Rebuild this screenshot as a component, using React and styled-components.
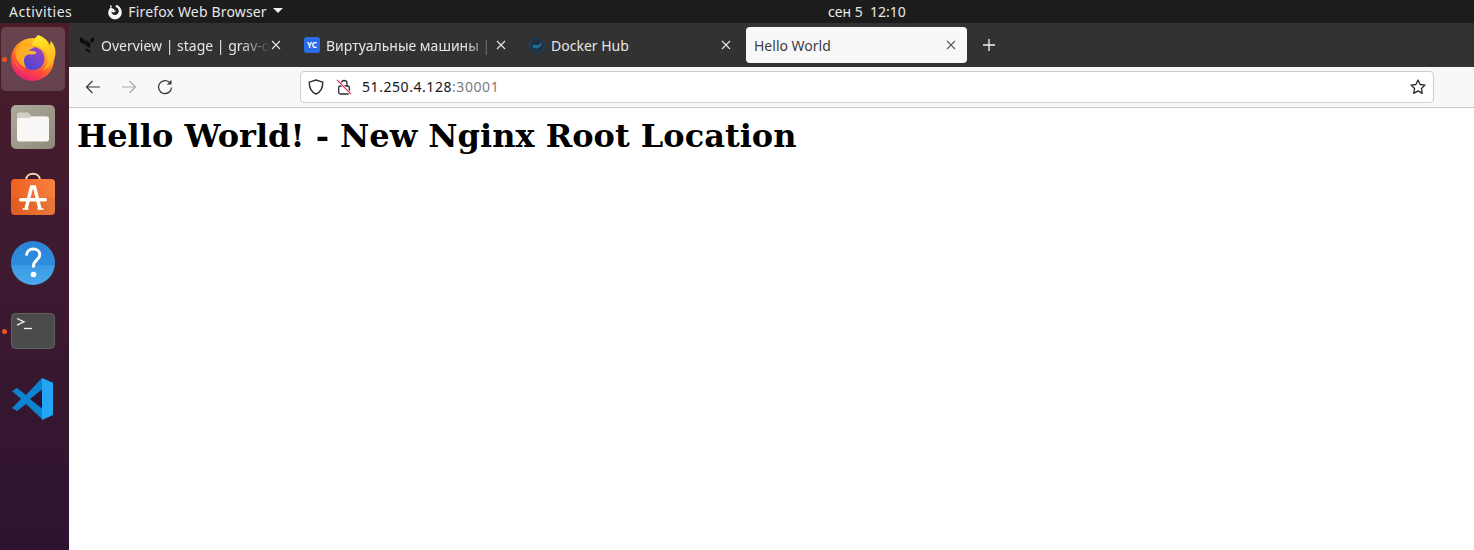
import React from "react";
import styled, { createGlobalStyle } from "styled-components";

const Global = createGlobalStyle`
  html, body { margin: 0; padding: 0; background: #fff; }
  body { font-family: "Noto Sans", "Open Sans", sans-serif; overflow: hidden; }
  #root { width: 1474px; height: 550px; }
`;

const Screen = styled.div`
  width: 1474px; height: 550px; display: flex; flex-direction: column; overflow: hidden;
`;
const TopBar = styled.header`
  height: 23px; flex: none; background: #1c1c1c; color: #e6e6e6; display: flex; align-items: center;
  font-size: 14px; line-height: 23px; white-space: nowrap; padding-left: 9px;
`;
const TopLeft = styled.div`
  width: 819px; flex: none; display: flex; align-items: center; gap: 35px;
`;
const Activities = styled.span`letter-spacing: 0.5px;`;
const AppMenu = styled.div`display: flex; align-items: center; gap: 5px;`;
const AppName = styled.span`letter-spacing: 0.16px; margin-right: 1px;`;
const Caret = styled.span`
  width: 0; height: 0; border-left: 5px solid transparent; border-right: 5px solid transparent;
  border-top: 5px solid #eee; margin-top: -2px;
`;
const Clock = styled.div`white-space: pre; color: #e8e8e8;`;
const Desktop = styled.div`flex: 1; display: flex; min-height: 0;`;
const Dock = styled.nav`
  width: 69px; flex: none; box-sizing: border-box; padding: 4px 4px 0 1px; display: flex; flex-direction: column; gap: 4px;
  background: linear-gradient(180deg, #4a1d29 0%, #3d1a30 45%, #2e1330 100%);
`;
const DockSlot = styled.div`
  height: 64px; position: relative; display: flex; align-items: center; justify-content: center; border-radius: 5px;
  background: ${p => (p.$active ? "rgba(255,255,255,.17)" : "transparent")};
`;
const RunDot = styled.span`
  position: absolute; left: 1px; top: 50%; width: 5px; height: 5px; margin-top: -2px; border-radius: 50%; background: #e95420;
`;
const Browser = styled.main`flex: 1; min-width: 0; display: flex; flex-direction: column; background: #fff;`;
const TabBar = styled.div`
  height: 44px; flex: none; background: #323232; display: flex; align-items: center; padding-left: 2px; box-sizing: border-box;
`;
const Tab = styled.div`
  width: ${p => (p.$active ? "221px" : "225px")}; height: 36px; flex: none; box-sizing: border-box; display: flex; align-items: center;
  padding: 0 ${p => (p.$active ? "11px" : "15px")} 0 ${p => (p.$active ? "8px" : "8px")};
  border-radius: 4px; font-size: 14px; white-space: nowrap;
  color: ${p => (p.$active ? "#3d3d42" : "#e6e6e6")}; background: ${p => (p.$active ? "#f8f8f8" : "transparent")};
`;
const Favicon = styled.span`
  width: 16px; height: 16px; flex: none; margin-right: 6px; display: flex; align-items: center; justify-content: center;
`;
const YcBadge = styled.span`
  width: 16px; height: 16px; border-radius: 3px; background: #2a6ce8; color: #fff; font-size: 8px; font-weight: 700;
  display: flex; align-items: center; justify-content: center; line-height: 1;
`;
const TabTitle = styled.span`
  flex: 1; min-width: 0;
  ${p => p.$fade && "mask-image: linear-gradient(90deg, #000 82%, transparent 100%);"}
`;
const NewTab = styled.span`margin-left: 15px; display: flex;`;
const Toolbar = styled.div`
  height: 41px; flex: none; box-sizing: border-box; background: #f8f8f8; border-bottom: 1px solid #c8c8c8;
  display: flex; align-items: center; padding: 0 40px 1px 16px;
`;
const NavBtn = styled.span`width: 16px; height: 16px; margin-right: 20px; display: flex; flex: none; color: ${p => p.$off ? "#a9a9ab" : "#38383d"};`;
const UrlBar = styled.div`
  margin-left: 107px; flex: 1; height: 32px; box-sizing: border-box; background: #fff; border: 1px solid #cfcfcf; border-radius: 4px;
  display: flex; align-items: center; padding: 0 7px 0 7px; font-size: 14px; color: #15141a;
`;
const UrlIcon = styled.span`width: 16px; height: 16px; flex: none; margin-right: 12px; display: flex;`;
const UrlText = styled.span`flex: 1; margin-left: -2px; letter-spacing: 0.56px;`;
const Port = styled.span`color: #7b7b7f;`;
const Page = styled.div`flex: 1; padding: 8px; background: #fff;`;
const Heading = styled.h1`
  margin: 2px 0 0; font: 700 32px/37px "DejaVu Serif", serif; color: #000; white-space: nowrap;
`;
const LogoWrap = styled.span`display: flex; margin-top: -2px;`;

const Close = ({ color = "#e6e6e6" }) => (
  <svg width="10" height="10" viewBox="0 0 10 10" style={{ flex: "none" }}>
    <path d="M1 1l8 8M9 1l-8 8" stroke={color} strokeWidth="1.1" />
  </svg>
);

const FirefoxGlyph = () => (
  <svg width="16" height="16" viewBox="0 0 16 16">
    <path d="M9.500 .8 8.300 3C10.600 3.200 12 5.300 11.700 7.500 11.400 9.700 9.500 11.200 7.400 10.900 5.500 10.600 4.300 9 4.600 7.400c.5.800 1.500 1.200 2.500 1 1-.2 1.700-1 1.800-1.800H6.800c0-.6.400-1 .9-1.400C6.200 4.800 5 4.300 4.100 3.200 2.300 4.500 1.200 6.300 1.200 8.400 1.200 12.200 4.300 15.200 8 15.200c3.800 0 6.800-3 6.800-6.800 0-3.500-2.300-6.500-5.300-7.600z" fill="#f4f4f4" />
    <path d="M3.500 .8 5.200 3 3 3.400z" fill="#f4f4f4" />
  </svg>
);

const FirefoxLogo = () => (
  <svg width="46" height="46" viewBox="0 0 46 46">
    <defs>
      <linearGradient id="ffOuter" x1="0.8" y1="0" x2="0.3" y2="1">
        <stop offset="0" stopColor="#ffd426" />
        <stop offset=".4" stopColor="#ff9a1f" />
        <stop offset=".68" stopColor="#ff4d38" />
        <stop offset="1" stopColor="#ea1a7c" />
      </linearGradient>
      <linearGradient id="ffInner" x1="0.75" y1="0" x2="0.25" y2="1">
        <stop offset="0" stopColor="#9a44c8" />
        <stop offset="1" stopColor="#4a46d0" />
      </linearGradient>
      <linearGradient id="ffFlame" x1="0.4" y1="0" x2="0.7" y2="1">
        <stop offset="0" stopColor="#ffea2a" />
        <stop offset="1" stopColor="#ffa61c" />
      </linearGradient>
      <linearGradient id="ffFox" x1="0" y1="0" x2="1" y2="0">
        <stop offset="0" stopColor="#ffa81f" />
        <stop offset="1" stopColor="#ffc42a" />
      </linearGradient>
    </defs>
    <circle cx="22.500" cy="24.500" r="21.500" fill="url(#ffOuter)" />
    <path d="M28 0c-3 3-5.500 6.500-6 10.500 6 .3 12 3 14.500 8.500 1.500 3.500 1.500 7.500 0 11-1 2.300-2.500 4-4 5.500 8-3 13-9.500 13-18 0-5-2-9-5-12 .2 2 0 3.500-.8 4.800C38.500 6 34 2 28 0z" fill="url(#ffFlame)" />
    <circle cx="23" cy="23.500" r="11.500" fill="url(#ffInner)" />
    <path d="M13 8c.5 2 1.500 3.300 3 4.500 3.500-1 6.500-.7 8.500 0-2.500.8-4.500 1.800-6 3.500 2.500-.5 5-.2 7.500 1 .8.500.5 1.500-1 2-2 .6-4 .3-6 .5-3 .3-5 2.700-5 6 0 3 1 5.500 2.500 7.500-6-2-10.500-7.500-11-13.500-.2-2.500 1-5 2.500-7 .3 1 .8 1.800 1.300 2.500C8.300 13.500 10 10 13 8z" fill="url(#ffFox)" opacity=".95" />
    <path d="M4 20c1 7 5 13 11 16-4-1-8-4-10-8-1-2.500-1.500-5-1-8z" fill="#ff6a2a" />
  </svg>
);

const FilesIcon = () => (
  <svg width="44" height="44" viewBox="0 0 44 44">
    <defs>
      <linearGradient id="filesBg" x1="0" y1="0" x2="1" y2="1">
        <stop offset="0" stopColor="#aeaa9b" /><stop offset="1" stopColor="#8f8a79" />
      </linearGradient>
    </defs>
    <rect width="44" height="44" rx="5" fill="url(#filesBg)" />
    <path d="M6 10a2.500 2.500 0 0 1 2.500-2.500h8.500l4 4H35a3 3 0 0 1 3 3v6H6z" fill="#d3cfc4" />
    <path d="M6 15a2 2 0 0 1 2-2h9.500l4-1.500H35.500a2.500 2.500 0 0 1 2.500 2.500v20a2.500 2.500 0 0 1-2.500 2.500h-27A2.500 2.500 0 0 1 6 34z" fill="#f8f7f5" />
  </svg>
);

const StoreIcon = () => (
  <svg width="44" height="44" viewBox="0 0 44 44" style={{ overflow: "visible" }}>
    <defs>
      <linearGradient id="storeBg" x1="0" y1="0" x2="1" y2="0">
        <stop offset="0" stopColor="#ee6122" /><stop offset="1" stopColor="#f5813f" />
      </linearGradient>
    </defs>
    <path d="M15 7C15.500 -1.500 28.500 -1.500 29 7" fill="none" stroke="#fbd9b0" strokeWidth="2" />
    <rect y="6" width="44" height="36" rx="4" fill="url(#storeBg)" />
    <path d="M0 24h44v14a4 4 0 0 1-4 4H4a4 4 0 0 1-4-4z" fill="#000" opacity=".05" />
    <path d="M15 36 20.500 14h3L29 36" fill="none" stroke="#fff" strokeWidth="3.400" />
    <rect x="8" y="25" width="28" height="3.600" rx="1.800" fill="#fff" />
    <path d="M11.500 36h6M26.500 36h6" stroke="#fff" strokeWidth="1.400" />
  </svg>
);

const HelpIcon = () => (
  <svg width="44" height="44" viewBox="0 0 44 44">
    <defs>
      <linearGradient id="helpBg" x1="0" y1="0" x2="0" y2="1">
        <stop offset="0" stopColor="#2a84d6" /><stop offset=".55" stopColor="#2f8cdc" /><stop offset=".55" stopColor="#3b9ae4" /><stop offset="1" stopColor="#4aaaec" />
      </linearGradient>
    </defs>
    <circle cx="22" cy="22" r="22" fill="url(#helpBg)" />
    <path d="M15.500 14.500c0-4 3-6.500 6.800-6.500 3.800 0 6.500 2.400 6.500 5.700 0 5-6.300 5.600-6.300 11.300v1.500" fill="none" stroke="#fff" strokeWidth="3" />
    <circle cx="22.500" cy="33.500" r="2.800" fill="#fff" />
  </svg>
);

const TerminalIcon = () => (
  <svg width="44" height="36" viewBox="0 0 44 36">
    <rect x=".5" y=".5" width="43" height="35" rx="4" fill="#4b4b4b" stroke="#626262" />
    <path d="M6 5.500l7 3.300-7 3.300" fill="none" stroke="#f2f2f2" strokeWidth="1.300" />
    <path d="M13 15.500h8" stroke="#f2f2f2" strokeWidth="1.300" />
  </svg>
);

const VsCodeIcon = () => (
  <svg width="44" height="44" viewBox="0 0 44 44">
    <path d="M31 1 15 18 6 11 1 14l9 8-9 9 5 3 9-7 16 15 11-5V6z" fill="#0c83cf" />
    <path d="M31 1l11 5v32l-11 5z" fill="#22a5f5" />
    <path d="M31 12.500 19 22l12 9.500z" fill="#2e1330" />
  </svg>
);

const TerraformIcon = () => (
  <svg width="16" height="16" viewBox="0 0 16 16">
    <path d="M1 0l4.800 2.800v5L1 5zM6.300 3.100l4.800 2.800v5L6.300 8.100zM11.600 5.900l3.400-2v-4l-3.400 2zM6.300 11l4.800 2.800V16l-4.800-2.800z" fill="#0c0c0c" />
  </svg>
);

const DockerFav = () => (
  <svg width="16" height="16" viewBox="0 0 16 16">
    <circle cx="8" cy="8" r="7.300" fill="#22303e" stroke="#14496e" />
    <path d="M3 8h7c1-2 2-2.500 3-2.500-.2 3-2.500 6-6 6-2.500 0-3.600-1.600-4-3.500z" fill="#1f6f9e" />
  </svg>
);

const Back = () => (
  <svg width="16" height="16" viewBox="0 0 16 16" fill="none" stroke="currentColor" strokeWidth="1.200">
    <path d="M15 8H1.500M7.500 2 1.500 8l6 6" />
  </svg>
);
const Forward = () => (
  <svg width="16" height="16" viewBox="0 0 16 16" fill="none" stroke="currentColor" strokeWidth="1.200">
    <path d="M1 8h13.500M8.500 2l6 6-6 6" />
  </svg>
);
const Reload = () => (
  <svg width="16" height="16" viewBox="0 0 16 16" fill="none" stroke="currentColor" strokeWidth="1.300">
    <path d="M14.500 8.500A6.500 6.500 0 1 1 12 3" />
    <path d="M14.500 .8V5.500H9.800z" fill="currentColor" stroke="none" />
  </svg>
);
const Shield = () => (
  <svg width="16" height="16" viewBox="0 0 16 16" fill="none" stroke="#2b2a33" strokeWidth="1.400">
    <path d="M8 1 14.800 3.200c0 6-1.800 9.700-6.800 11.800C3 12.900 1.200 9.200 1.200 3.200z" />
  </svg>
);
const BrokenLock = () => (
  <svg width="16" height="16" viewBox="0 0 16 16" fill="none">
    <path d="M5 7V4.500a3 3 0 0 1 6 0V7" stroke="#2b2a33" strokeWidth="1.300" />
    <rect x="2.700" y="7" width="10.600" height="8" rx="1.500" stroke="#2b2a33" strokeWidth="1.300" />
    <path d="M1 .8 15 15.200" stroke="#fff" strokeWidth="2.400" />
    <path d="M1 .8 15 15.200" stroke="#e22850" strokeWidth="1.200" />
  </svg>
);
const Star = () => (
  <svg width="16" height="16" viewBox="0 0 16 16" fill="none" stroke="#2b2a33" strokeWidth="1.300" strokeLinejoin="round">
    <path d="M8 1l2.100 4.500 4.900.6-3.600 3.400.9 4.900L8 11.900l-4.300 2.500.9-4.900L1 6.100l4.900-.6z" />
  </svg>
);

export default function App() {
  return (
    <Screen>
      <Global />
      <TopBar>
        <TopLeft>
          <Activities>Activities</Activities>
          <AppMenu>
            <FirefoxGlyph />
            <AppName>Firefox Web Browser</AppName>
            <Caret />
          </AppMenu>
        </TopLeft>
        <Clock>сен 5  12:10</Clock>
      </TopBar>
      <Desktop>
        <Dock>
          <DockSlot $active><RunDot /><LogoWrap><FirefoxLogo /></LogoWrap></DockSlot>
          <DockSlot><FilesIcon /></DockSlot>
          <DockSlot><StoreIcon /></DockSlot>
          <DockSlot><HelpIcon /></DockSlot>
          <DockSlot><RunDot /><TerminalIcon /></DockSlot>
          <DockSlot><VsCodeIcon /></DockSlot>
        </Dock>
        <Browser>
          <TabBar>
            <Tab>
              <Favicon><TerraformIcon /></Favicon>
              <TabTitle $fade>Overview | stage | grav-o</TabTitle>
              <Close />
            </Tab>
            <Tab>
              <Favicon><YcBadge>YC</YcBadge></Favicon>
              <TabTitle $fade>Виртуальные машины | </TabTitle>
              <Close />
            </Tab>
            <Tab>
              <Favicon><DockerFav /></Favicon>
              <TabTitle>Docker Hub</TabTitle>
              <Close />
            </Tab>
            <Tab $active>
              <TabTitle>Hello World</TabTitle>
              <Close color="#5a5a5f" />
            </Tab>
            <NewTab>
              <svg width="14" height="14" viewBox="0 0 14 14"><path d="M7 1v12M1 7h12" stroke="#f0f0f0" strokeWidth="1.300" /></svg>
            </NewTab>
          </TabBar>
          <Toolbar>
            <NavBtn><Back /></NavBtn>
            <NavBtn $off><Forward /></NavBtn>
            <NavBtn><Reload /></NavBtn>
            <UrlBar>
              <UrlIcon><Shield /></UrlIcon>
              <UrlIcon><BrokenLock /></UrlIcon>
              <UrlText>51.250.4.128<Port>:30001</Port></UrlText>
              <Star />
            </UrlBar>
          </Toolbar>
          <Page>
            <Heading>Hello World! - New Nginx Root Location</Heading>
          </Page>
        </Browser>
      </Desktop>
    </Screen>
  );
}
